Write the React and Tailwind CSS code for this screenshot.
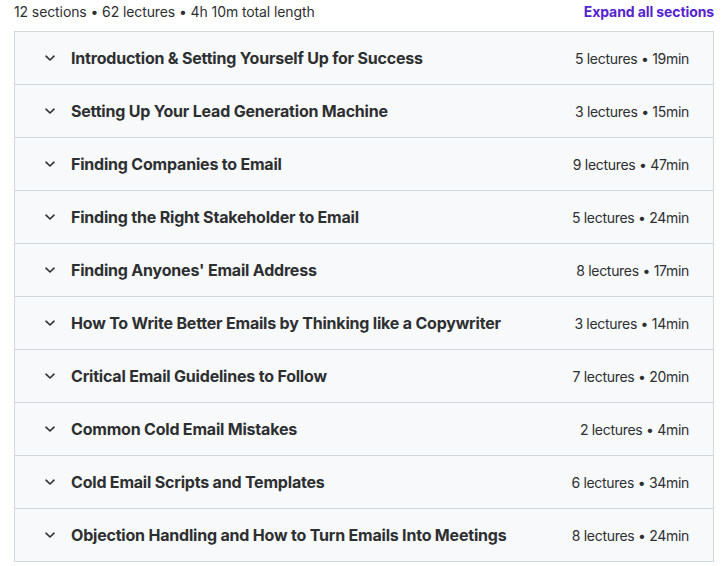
import React from "react";

const sections = [
  { title: "Introduction & Setting Yourself Up for Success", lectures: 5, length: "19min" },
  { title: "Setting Up Your Lead Generation Machine", lectures: 3, length: "15min" },
  { title: "Finding Companies to Email", lectures: 9, length: "47min" },
  { title: "Finding the Right Stakeholder to Email", lectures: 5, length: "24min" },
  { title: "Finding Anyones' Email Address", lectures: 8, length: "17min" },
  { title: "How To Write Better Emails by Thinking like a Copywriter", lectures: 3, length: "14min" },
  { title: "Critical Email Guidelines to Follow", lectures: 7, length: "20min" },
  { title: "Common Cold Email Mistakes", lectures: 2, length: "4min" },
  { title: "Cold Email Scripts and Templates", lectures: 6, length: "34min" },
  { title: "Objection Handling and How to Turn Emails Into Meetings", lectures: 8, length: "24min" },
];

function Chevron() {
  return (
    <svg width="12" height="12" viewBox="0 0 12 12" className="shrink-0">
      <path d="M2 4.2l4 3.8 4-3.8" fill="none" stroke="#2d2f31" strokeWidth="1.6" strokeLinecap="round" strokeLinejoin="round" />
    </svg>
  );
}

export default function App() {
  return (
    <div className="w-[722px] h-[566px] bg-white pl-[14px] pr-[8px] text-[#2d2f31]" style={{ fontFamily: "Inter, 'Liberation Sans', sans-serif" }}>
      <div className="h-[22px] flex items-center justify-between">
        <span className="text-[14px] tracking-[-0.1px]">12 sections • 62 lectures • 4h 10m total length</span>
        <button className="text-[14px] font-bold tracking-[-0.1px] text-[#5624d0]">Expand all sections</button>
      </div>
      <div className="mt-[9px] border border-[#d1d7dc] divide-y divide-[#d1d7dc]">
        {sections.map((s) => (
          <div key={s.title} className="box-content h-[52px] bg-[#f7f9fa] flex items-center pl-[29px] pr-[24px]">
            <Chevron />
            <h3 className="ml-[15px] flex-1 text-[16px] font-bold tracking-[-0.2px]">{s.title}</h3>
            <span className="text-[14px] tracking-[-0.3px]">
              {s.lectures} lectures • {s.length}
            </span>
          </div>
        ))}
      </div>
    </div>
  );
}
